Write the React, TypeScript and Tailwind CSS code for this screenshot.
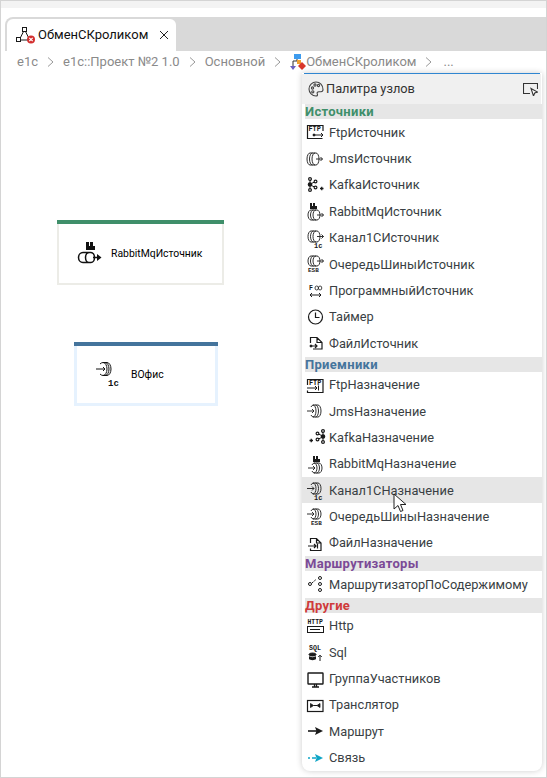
import React from "react";

type IconProps = { children: React.ReactNode };

const Ico = ({ children }: IconProps) => (
  <svg width="24" height="24" viewBox="0 0 24 24" fill="none" stroke="#1a1a1a" strokeWidth="1" className="shrink-0">
    {children}
  </svg>
);

// coil with the arrow going out on the right (sources)
const CoilOut = ({ x, y, h = 12 }: { x: number; y: number; h?: number }) => {
  const r = h / 2;
  return (
    <g strokeWidth="0.9">
      <path d={`M${x + 3} ${y}h6a3 ${r} 0 0 1 0 ${h}h-6a3 ${r} 0 0 1 0-${h}z`} />
      <path d={`M${x + 5.5} ${y}a3 ${r} 0 0 0 0 ${h}M${x + 8} ${y}a3 ${r} 0 0 0 0 ${h}`} />
      <path d={`M${x + 9} ${y + r}h6.5M${x + 13.5} ${y + r - 2}l2 2-2 2`} />
    </g>
  );
};

// coil with the arrow coming in on the left (targets)
const CoilIn = ({ x, y, h = 12 }: { x: number; y: number; h?: number }) => {
  const r = h / 2;
  return (
    <g strokeWidth="0.9">
      <path d={`M${x + 4} ${y + 2}a4 4 0 0 1 2-2h5a3 ${r} 0 0 1 0 ${h}h-5a4 4 0 0 1-2-2`} />
      <path d={`M${x + 8.5} ${y}a3 ${r} 0 0 1 0 ${h}M${x + 6} ${y}a3 ${r} 0 0 1 0 ${h}`} />
      <path d={`M${x} ${y + r}h7M${x + 5} ${y + r - 2}l2 2-2 2`} />
    </g>
  );
};

const Tiny = ({ x, y, t, size = 6 }: { x: number; y: number; t: string; size?: number }) => (
  <text x={x} y={y} fontSize={size} fontWeight={700} fontFamily="'Liberation Mono', monospace" fill="#1a1a1a" stroke="none">
    {t}
  </text>
);

const Kafka = ({ flip = false }: { flip?: boolean }) => (
  <g transform={flip ? "translate(25 0) scale(-1 1)" : ""} stroke="#1a1a1a" strokeWidth="1.2">
    <circle cx="6" cy="6" r="1.4" />
    <circle cx="6" cy="17" r="1.4" />
    <circle cx="6" cy="11.5" r="1.7" fill="#1a1a1a" />
    <circle cx="11.5" cy="8.5" r="1.4" />
    <circle cx="11.5" cy="14.5" r="1.4" />
    <path d="M6 7.5v8M7.5 10.5l2.8-1.4M7.5 12.5l2.8 1.4" strokeWidth="1" />
    <path d="M16 15.5h3.5M17.75 13.75v3.5" strokeWidth="1.3" />
  </g>
);

const Rabbit = ({ x, y }: { x: number; y: number }) => (
  <path d={`M${x} ${y + 6}v-6h2v3h1v-3h2v3h2v3z`} fill="#1a1a1a" stroke="none" />
);

const icons: Record<string, React.ReactNode> = {
  ftpIn: (
    <Ico>
      <path d="M19 11V5.5H3.5V18.5H18.5" strokeWidth="1.2" />
      <Tiny x={4.5} y={11} t="FTP" size={6.8} />
      <path d="M9 15h10M17 13l2 2-2 2" />
      <circle cx="10" cy="15" r="1" fill="#1a1a1a" />
    </Ico>
  ),
  jmsIn: (
    <Ico>
      <CoilOut x={3} y={6} />
    </Ico>
  ),
  kafkaIn: (
    <Ico>
      <Kafka />
    </Ico>
  ),
  rabbitIn: (
    <Ico>
      <Rabbit x={6} y={4} />
      <CoilOut x={4} y={11} h={10} />
    </Ico>
  ),
  c1In: (
    <Ico>
      <CoilOut x={4} y={5} h={11} />
      <Tiny x={10} y={22} t="1c" size={7} />
    </Ico>
  ),
  esbIn: (
    <Ico>
      <CoilOut x={4} y={4} h={10} />
      <Tiny x={4} y={20} t="ESB" size={6} />
    </Ico>
  ),
  prog: (
    <Ico>
      <Tiny x={5} y={11} t="F" size={6.5} />
      <path d="M11 9a1.7 2 0 0 1 3.4 0 1.7 2 0 0 1-3.4 0zM14.4 9a1.7 2 0 0 1 3.4 0 1.7 2 0 0 1-3.4 0z" strokeWidth="0.8" />
      <path d="M6 16h11M8 14l-2 2 2 2M15 14l2 2-2 2" />
    </Ico>
  ),
  timer: (
    <Ico>
      <circle cx="11.5" cy="12" r="7" strokeWidth="1.2" />
      <path d="M11.5 7.5v5h4" strokeWidth="1.2" />
    </Ico>
  ),
  fileIn: (
    <Ico>
      <path d="M6.5 12V6.5H13l5 5V18H9M13 6.5v5h5" strokeWidth="1.2" />
      <path d="M6 15h7M11 13l2 2-2 2" strokeWidth="1.2" />
      <circle cx="7" cy="15" r="1" fill="#1a1a1a" />
    </Ico>
  ),
  ftpOut: (
    <Ico>
      <path d="M3.5 12V6.5H19V19.5H3.5v-2" strokeWidth="1.2" />
      <Tiny x={5} y={12} t="FTP" size={6.8} />
      <path d="M3 15h10M11 13l2 2-2 2M14.5 12.5v5" />
    </Ico>
  ),
  jmsOut: (
    <Ico>
      <CoilIn x={3} y={6} />
    </Ico>
  ),
  kafkaOut: (
    <Ico>
      <Kafka flip />
    </Ico>
  ),
  rabbitOut: (
    <Ico>
      <Rabbit x={9} y={4} />
      <CoilIn x={4} y={11} h={10} />
    </Ico>
  ),
  c1Out: (
    <Ico>
      <CoilIn x={3} y={5} h={11} />
      <Tiny x={10} y={22} t="1c" size={7} />
    </Ico>
  ),
  esbOut: (
    <Ico>
      <CoilIn x={3} y={4} h={10} />
      <Tiny x={7} y={20} t="ESB" size={6} />
    </Ico>
  ),
  fileOut: (
    <Ico>
      <path d="M6.5 12V7.5h6L17 12v7.5H6.5v-2M12.5 7.5V12H17" strokeWidth="1.2" />
      <path d="M4 15h8M10 13l2 2-2 2M13.5 12.5v5" strokeWidth="1.2" />
    </Ico>
  ),
  router: (
    <Ico>
      <circle cx="6" cy="12" r="1.5" />
      <circle cx="16" cy="6" r="1.5" />
      <circle cx="16" cy="12" r="1.5" />
      <circle cx="16" cy="18" r="1.5" />
      <path d="M8 11l4-3.5" strokeDasharray="2 1" />
    </Ico>
  ),
  http: (
    <Ico>
      <Tiny x={3.5} y={10} t="HTTP" size={6.4} />
      <rect x="3.5" y="12.5" width="16" height="6" />
      <path d="M6 15.5h10" />
    </Ico>
  ),
  sql: (
    <Ico>
      <Tiny x={5} y={10} t="SQL" size={6.6} />
      <ellipse cx="8.5" cy="14.5" rx="3.5" ry="1.5" fill="#1a1a1a" />
      <path d="M5 16v3c1 1.5 6 1.5 7 0v-3c-1 1.500-6 1.500-7 0z" fill="#1a1a1a" stroke="none" />
      <path d="M16 21v-5.5M14.2 17l1.800-1.800 1.800 1.800" />
    </Ico>
  ),
  group: (
    <Ico>
      <rect x="4" y="6" width="15" height="11" strokeWidth="1.4" rx="0.5" />
      <path d="M8 20h7M10.500 17v3h2v-3" strokeWidth="1.3" />
    </Ico>
  ),
  translator: (
    <Ico>
      <rect x="3.5" y="7.5" width="15.5" height="11" strokeWidth="1.2" />
      <path d="M6.5 10.500v4l3-2zM16 10.500v4l-3-2z" fill="#1a1a1a" stroke="#1a1a1a" strokeWidth="0.8" />
      <path d="M9.5 12.500h3.500" />
    </Ico>
  ),
  route: (
    <Ico>
      <path d="M4 12h9" strokeWidth="1.6" />
      <path d="M11 8l8 4-8 4 1.500-4z" fill="#1a1a1a" stroke="none" />
    </Ico>
  ),
  link: (
    <Ico>
      <path d="M4 12h2M8 12h4" stroke="#0ea5c6" strokeWidth="1.6" />
      <path d="M11 8l8 4-8 4 1.500-4z" fill="#0ea5c6" stroke="none" />
    </Ico>
  ),
};

type Row = { icon: string; label: string; active?: boolean };
type Group = { title: string; color: string; rows: Row[] };

const groups: Group[] = [
  {
    title: "Источники",
    color: "text-[#3f8f6a]",
    rows: [
      { icon: "ftpIn", label: "FtpИсточник" },
      { icon: "jmsIn", label: "JmsИсточник" },
      { icon: "kafkaIn", label: "KafkaИсточник" },
      { icon: "rabbitIn", label: "RabbitMqИсточник" },
      { icon: "c1In", label: "Канал1СИсточник" },
      { icon: "esbIn", label: "ОчередьШиныИсточник" },
      { icon: "prog", label: "ПрограммныйИсточник" },
      { icon: "timer", label: "Таймер" },
      { icon: "fileIn", label: "ФайлИсточник" },
    ],
  },
  {
    title: "Приемники",
    color: "text-[#44749c]",
    rows: [
      { icon: "ftpOut", label: "FtpНазначение" },
      { icon: "jmsOut", label: "JmsНазначение" },
      { icon: "kafkaOut", label: "KafkaНазначение" },
      { icon: "rabbitOut", label: "RabbitMqНазначение" },
      { icon: "c1Out", label: "Канал1СНазначение", active: true },
      { icon: "esbOut", label: "ОчередьШиныНазначение" },
      { icon: "fileOut", label: "ФайлНазначение" },
    ],
  },
  {
    title: "Маршрутизаторы",
    color: "text-[#7b4a96]",
    rows: [{ icon: "router", label: "МаршрутизаторПоСодержимому" }],
  },
  {
    title: "Другие",
    color: "text-[#cf3a3a]",
    rows: [
      { icon: "http", label: "Http" },
      { icon: "sql", label: "Sql" },
      { icon: "group", label: "ГруппаУчастников" },
      { icon: "translator", label: "Транслятор" },
      { icon: "route", label: "Маршрут" },
      { icon: "link", label: "Связь" },
    ],
  },
];

const Chevron = () => (
  <svg width="7" height="12" viewBox="0 0 7 12" fill="none" stroke="#999" strokeWidth="1" className="shrink-0">
    <path d="M1 1.5L6 6l-5 4.5" />
  </svg>
);

const Crumb = ({ children }: { children: React.ReactNode }) => (
  <span className="flex items-center gap-[9px]">
    <span>{children}</span>
    <Chevron />
  </span>
);

const TabIcon = () => (
  <svg width="21" height="18" viewBox="0 0 21 18" fill="none" stroke="#1a1a1a" strokeWidth="1" className="shrink-0">
    <rect x="6.5" y="1.5" width="4" height="4" />
    <rect x="0.5" y="11.5" width="4" height="4" />
    <path d="M7.5 5.5l-3 6M9.5 5.5l3 6M4.5 14h8" />
    <circle cx="15" cy="13.5" r="4" fill="#d32f2f" stroke="none" />
    <path d="M13.3 11.8l3.4 3.4M16.7 11.8l-3.4 3.4" stroke="#fff" strokeWidth="1.2" />
  </svg>
);

const CrumbIcon = () => (
  <svg width="16" height="18" viewBox="0 0 16 18" className="shrink-0">
    <rect x="4" y="1" width="7" height="5" fill="#3d9bee" />
    <path d="M7 6v2H3v5" fill="none" stroke="#333" strokeWidth="1" />
    <rect x="7" y="7" width="4" height="4" fill="#f0a030" />
    <path d="M0 13h6l-3 4z" fill="#6a60c0" />
    <path d="M12 9l4 4-4 4-4-4z" fill="#d8362a" />
  </svg>
);

const Node = ({ pos, bar, border, icon, label }: { pos: string; bar: string; border: string; icon: React.ReactNode; label: string }) => (
  <div className={`absolute flex flex-col bg-white ${pos} ${border}`}>
    <div className={`h-[4px] ${bar}`} />
    <div className="flex flex-1 items-center pt-[1px]">
      {icon}
      <span className="text-[10.4px] text-black">{label}</span>
    </div>
  </div>
);

export default function App() {
  return (
    <div className="relative flex h-[778px] w-[547px] flex-col overflow-hidden border border-[#d4d4d4] bg-white font-['Roboto',sans-serif]">
      <div className="h-[7px] shrink-0 bg-[#f3f3f3]" />
      <div className="flex h-[43px] shrink-0 pt-[9px]">
        <div className="ml-[4px] flex flex-1 rounded-tl-[8px] bg-[#d9d9d9] pl-[2px] pt-[2px]">
          <div className="flex w-[169px] items-center gap-[1px] rounded-t-[6px] bg-white pl-[9px] text-[13px] text-[#111]">
            <TabIcon />
            <span>ОбменСКроликом</span>
            <svg width="10" height="10" viewBox="0 0 10 10" stroke="#222" strokeWidth="1" className="ml-[10px]">
              <path d="M1 1l8 8M9 1l-8 8" />
            </svg>
          </div>
        </div>
      </div>
      <div className="flex h-[22px] shrink-0 items-center gap-[9px] pl-[16px] text-[13px] text-[#8a8a8a]">
        <Crumb>e1c</Crumb>
        <Crumb>e1с::Проект №2 1.0</Crumb>
        <Crumb>Основной</Crumb>
        <span className="flex items-center gap-[9px]">
          <span className="flex items-center">
            <CrumbIcon />
            <span>ОбменСКроликом</span>
          </span>
          <Chevron />
        </span>
        <span className="ml-[2px]">...</span>
      </div>

      <div className="relative flex-1">
        <Node
          pos="left-[56px] top-[147px] h-[65px] w-[167px]"
          bar="-mx-[2px] bg-[#3f8f6a]"
          border="border-x-2 border-b-2 border-[#ecece7]"
          label="RabbitMqИсточник"
          icon={
            <svg width="52" height="32" viewBox="0 0 52 32" fill="none" stroke="#111" strokeWidth="1.5" className="shrink-0">
              <path d="M27 12V4h3v4h1V4h3v4h2v4z" fill="#111" stroke="none" />
              <path d="M24 14.5h8a3.5 5 0 0 1 0 10h-8a4.5 5 0 0 1 0-10zM30 14.5a3.5 5 0 0 0 0 10" />
              <path d="M34 19.5h5" />
              <path d="M38 16l4.5 3.5L38 23z" fill="#111" stroke="none" />
            </svg>
          }
        />
        <Node
          pos="left-[73px] top-[269px] h-[64px] w-[144px]"
          bar="-mx-[3px] bg-[#44749c]"
          border="border-x-[3px] border-b-[3px] border-[#e6f2fe]"
          label="ВОфис"
          icon={
            <svg width="54" height="36" viewBox="0 0 54 36" fill="none" stroke="#111" strokeWidth="1" className="shrink-0">
              <path d="M23 7a5 5 0 0 1 3-1.5h4a4 6.5 0 0 1 0 13h-4a5 5 0 0 1-3-1.5M28 5.5a4 6.5 0 0 1 0 13M26 5.5a4 6.5 0 0 1 0 13" />
              <path d="M19 12h9M26 10l2 2-2 2" />
              <text x="31" y="29" fontSize="9" fontWeight="700" fontFamily="'Liberation Mono', monospace" fill="#111" stroke="none">
                1c
              </text>
            </svg>
          }
        />
        <div className="absolute left-[301px] top-0 flex h-[698px] w-[240px] flex-col rounded-b-[8px] bg-white shadow-[0_0_6px_rgba(0,0,0,0.2)]">
          <div className="ml-[2px] h-px w-[236px] bg-[#2f86d1]" />
          <div className="mr-[1px] flex h-[30px] shrink-0 items-center bg-[#f0f0f0] pl-[5px] pr-[3px] text-[12.8px] text-[#333]">
            <svg width="18" height="18" viewBox="0 0 18 18" fill="none" stroke="#444" strokeWidth="1.1" className="mr-[1px] shrink-0">
              <path d="M9 2a7 7 0 1 0 0 14c1.5 0 1.8-1 1.3-2-.6-1.2.2-2.3 1.5-2.3H14c1.3 0 2-1 2-2.2C16 5 13 2 9 2z" />
              <circle cx="5.5" cy="8" r="1.1" />
              <circle cx="8" cy="5" r="1.1" />
              <circle cx="11.5" cy="5.5" r="1.1" />
              <circle cx="5.8" cy="11.8" r="1.1" />
            </svg>
            <span>Палитра узлов</span>
            <svg width="15" height="13" viewBox="0 0 15 13" fill="none" stroke="#333" strokeWidth="1.1" className="ml-auto shrink-0">
              <path d="M7 10.5H0.5V0.5h14V6" />
              <path d="M8 5.5l6.5 3.5-2.8 1L10.5 13z" fill="#fff" />
            </svg>
          </div>
          {groups.map((g) => (
            <div key={g.title} className="flex flex-col">
              <div className={`ml-[3px] flex h-[15px] items-center bg-[#e6e6e6] text-[13px] font-bold leading-none tracking-[0.3px] ${g.color}`}>
                {g.title}
              </div>
              {g.rows.map((r) => (
                <div
                  key={r.label}
                  className={`flex h-[26.4px] items-center gap-[1px] pl-[2px] text-[12.8px] text-[#3a3f44] ${r.active ? "bg-[#e6e6e6]" : ""}`}
                >
                  {icons[r.icon]}
                  <span>{r.label}</span>
                </div>
              ))}
            </div>
          ))}
        </div>
        {/* mouse pointer */}
        <svg width="14" height="20" viewBox="0 0 14 20" className="absolute left-[392px] top-[420px]">
          <path d="M1 1v15l4-3.5 2.500 6 2.500-1-2.500-6H13z" fill="#fff" stroke="#222" strokeWidth="1" />
        </svg>
      </div>
    </div>
  );
}
